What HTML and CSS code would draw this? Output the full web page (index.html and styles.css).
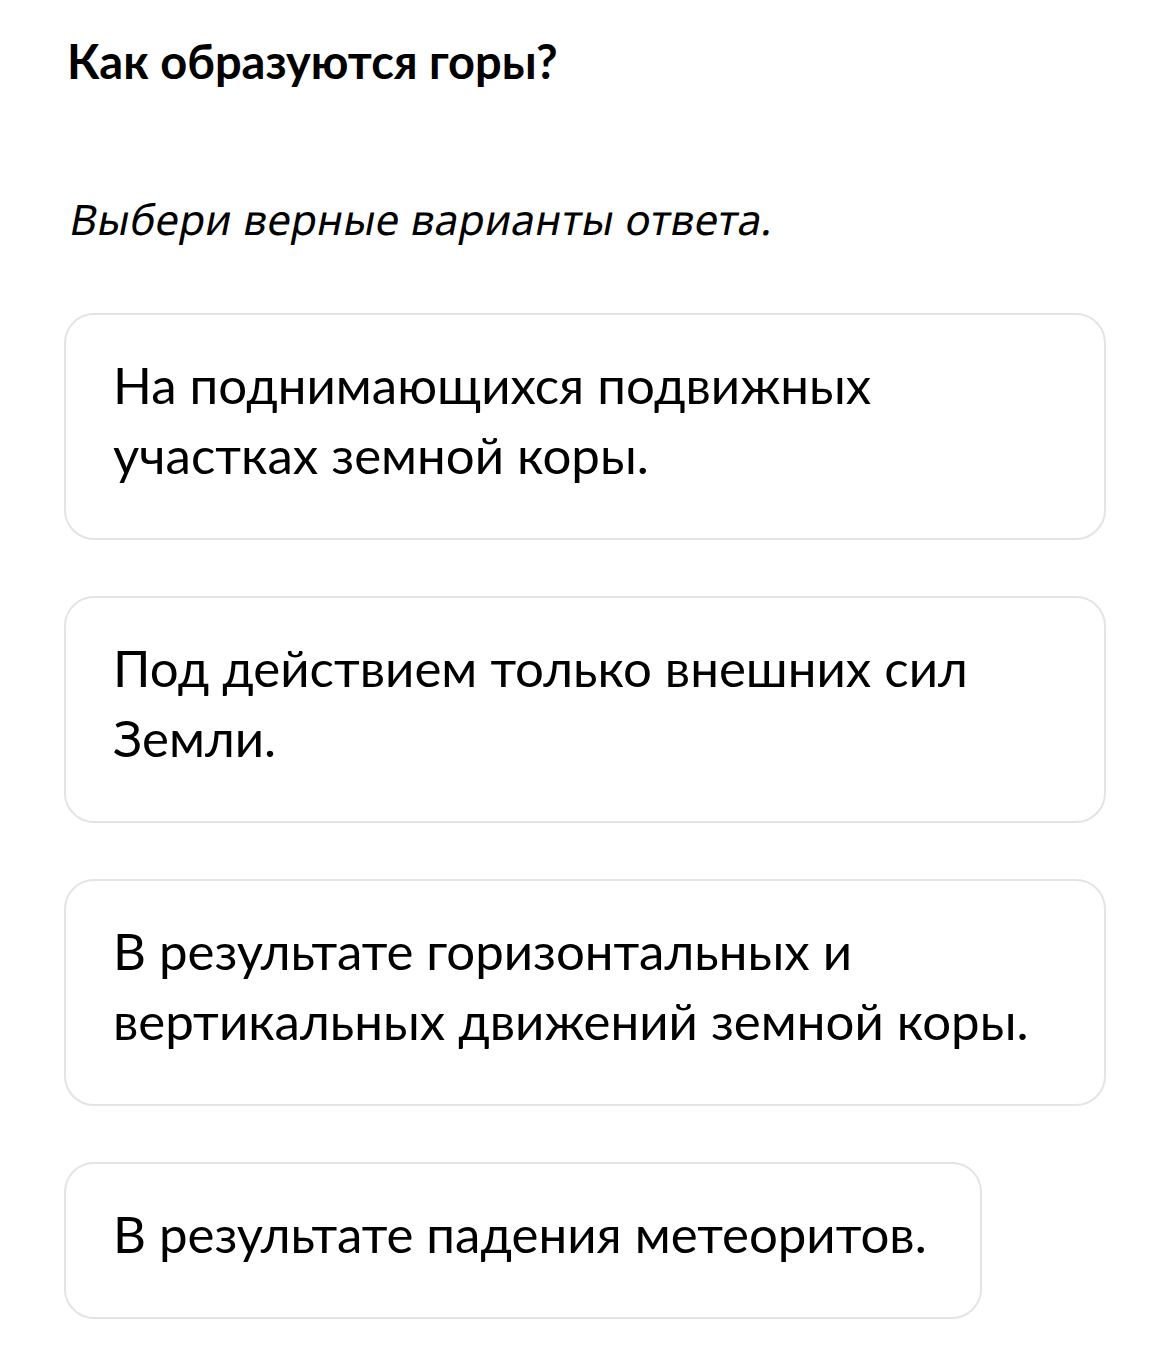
FILE: index.html
```html
<!DOCTYPE html>
<html lang="ru">
<head>
<meta charset="utf-8">
<title>Как образуются горы?</title>
<link rel="stylesheet" href="styles.css">
</head>
<body>
    <div id="main">
        <h1 class="question">Как образуются горы?</h1>
        <p class="hint"><span>Выбери верные варианты ответа.</span></p>
        <div class="answers">
            <div class="answer">На поднимающихся подвижных участках земной коры.</div>
            <div class="answer">Под действием только внешних сил Земли.</div>
            <div class="answer">В результате горизонтальных и вертикальных движений земной коры.</div>
            <div class="answer">В результате падения метеоритов.</div>
        </div>
    </div>
</body>
</html>
```
FILE: styles.css
```css
* {
    margin: 0;
    padding: 0;
    box-sizing: border-box;
}

body {
    background: #fff;
    color: #000;
    font-family: Lato, "Noto Sans", sans-serif;
}

#main {
    padding: 33px 64px 40px 64px;
}

.question {
    font-size: 47px;
    font-weight: 700;
    line-height: 56px;
    padding-left: 3px;
}

.hint {
    margin-top: 105px;
    font-family: "Noto Sans", sans-serif;
    font-size: 42px;
    line-height: 50px;
    letter-spacing: 0.5px;
    padding-left: 4px;
}

/* slanted by hand: the italic faces give cursive cyrillic */
.hint span {
    display: inline-block;
    transform: skewX(-11deg);
    transform-origin: 0 80%;
}

.answers {
    margin-top: 69px;
    display: flex;
    flex-direction: column;
    align-items: flex-start;
    gap: 56px;
}

.answer {
    border: 2px solid #e4e4e4;
    border-radius: 30px;
    padding: 35px 53px 48px 47px;
    font-size: 51px;
    line-height: 70px;
}
```
